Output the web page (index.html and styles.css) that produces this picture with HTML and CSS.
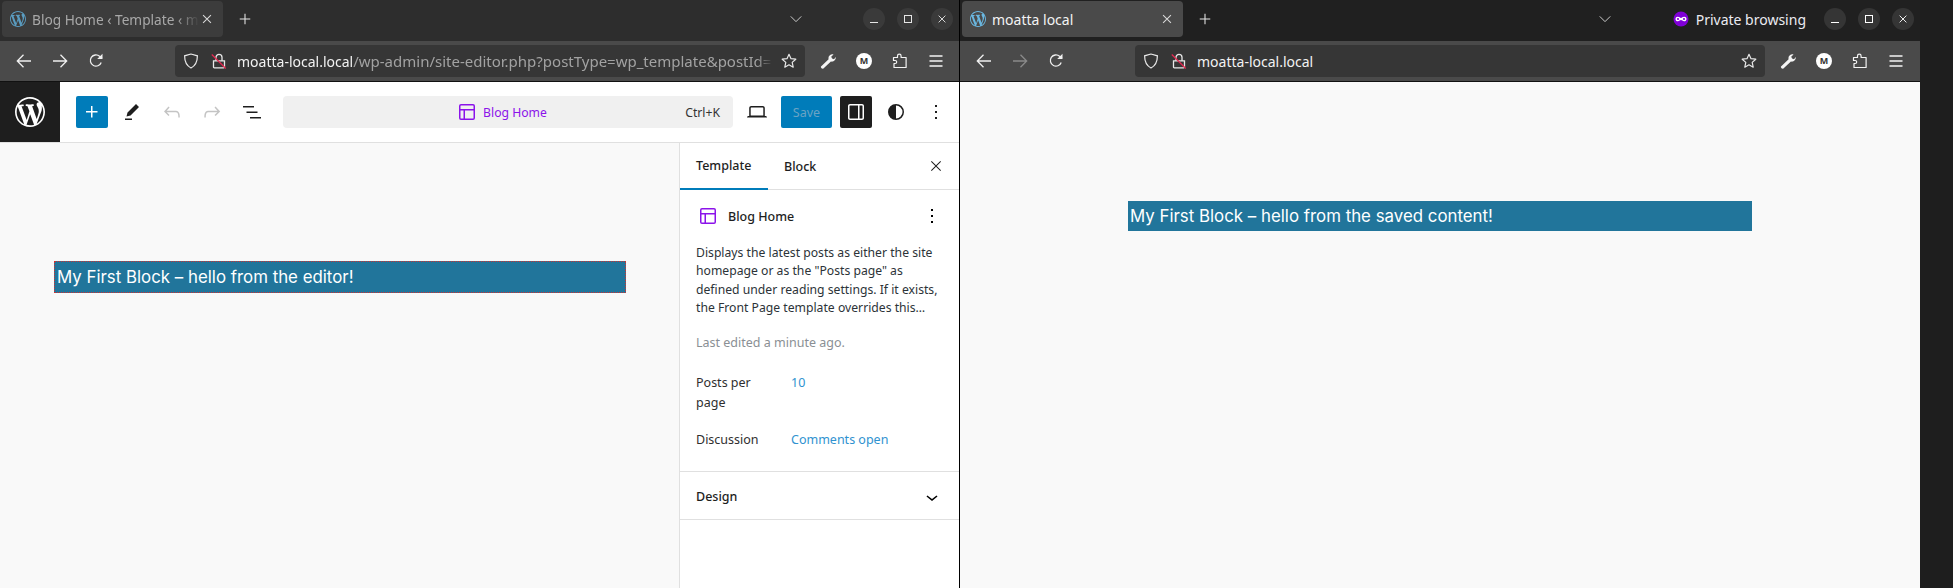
FILE: index.html
```html
<!DOCTYPE html>
<html lang="en">
<head>
<meta charset="utf-8">
<title>Two browser windows</title>
<link rel="stylesheet" href="styles.css">
</head>
<body>
<svg class="sprite" xmlns="http://www.w3.org/2000/svg">
  <symbol id="wp" viewBox="0 0 20 20"><path d="M20 10c0-5.51-4.49-10-10-10C4.48 0 0 4.49 0 10c0 5.52 4.48 10 10 10 5.51 0 10-4.48 10-10zM7.78 15.37L4.37 6.22c.55-.02 1.17-.08 1.17-.08.5-.06.44-1.13-.06-1.11 0 0-1.45.11-2.37.11-.18 0-.37 0-.58-.01C4.12 2.69 6.87 1.11 10 1.11c2.33 0 4.45.87 6.05 2.34-.68-.11-1.65.39-1.65 1.58 0 .74.45 1.36.9 2.1.35.61.55 1.36.55 2.46 0 1.49-1.4 5-1.4 5l-3.03-8.37c.54-.02.82-.17.82-.17.5-.05.44-1.25-.06-1.22 0 0-1.44.12-2.38.12-.87 0-2.33-.12-2.33-.12-.5-.03-.56 1.2-.06 1.22l.92.08 1.26 3.41zM17.41 10c.24-.64.74-1.87.43-4.25.7 1.29 1.05 2.71 1.05 4.25 0 3.29-1.73 6.24-4.4 7.78.97-2.59 1.94-5.2 2.92-7.78zM6.1 18.09C3.12 16.65 1.11 13.53 1.11 10c0-1.3.23-2.48.72-3.59C3.25 10.3 4.67 14.2 6.1 18.09zm4.03-6.63l2.58 6.98c-.86.29-1.76.45-2.71.45-.79 0-1.57-.11-2.29-.33.81-2.38 1.62-4.74 2.42-7.1z"/></symbol>
  <symbol id="plus" viewBox="0 0 24 24"><path d="M11 12.5V17.5H12.5V12.5H17.5V11H12.5V6H11V11H6V12.5H11Z"/></symbol>
  <symbol id="pen" viewBox="0 0 24 24"><path d="m19 7-3-3-8.5 8.5-1 4 4-1L19 7Zm-7 11.5H5V20h7v-1.5Z"/></symbol>
  <symbol id="undo" viewBox="0 0 24 24"><path d="M18.3 11.7c-.6-.6-1.4-.9-2.3-.9H6.7l2.9-3.3-1.1-1-4.5 5L8.5 16l1-1-2.7-2.7H16c.5 0 .9.2 1.3.5 1 1 1 3.4 1 4.5v.3h1.5v-.2c0-1.5 0-4.3-1.5-5.7z"/></symbol>
  <symbol id="redo" viewBox="0 0 24 24"><path d="M15.6 6.5l-1.1 1 2.9 3.3H8c-.9 0-1.7.3-2.3.9-1.4 1.5-1.4 4.2-1.4 5.6v.2h1.5v-.3c0-1.1 0-3.5 1-4.5.3-.3.7-.5 1.3-.5h9.2L14.5 15l1.1 1.1 4.6-4.6-4.6-5z"/></symbol>
  <symbol id="listview" viewBox="0 0 24 24"><path d="M3 6h11v1.5H3V6Zm3.5 5.5h11V13h-11v-1.5ZM21 17H10v1.5h11V17Z"/></symbol>
  <symbol id="layout" viewBox="0 0 24 24"><path d="M18 5.5H6a.5.5 0 0 0-.5.5v3h13V6a.5.5 0 0 0-.5-.5Zm.5 5H10v8h8a.5.5 0 0 0 .5-.5v-7.5Zm-10 0h-3V18a.5.5 0 0 0 .5.5h2.5v-8ZM6 4h12a2 2 0 0 1 2 2v12a2 2 0 0 1-2 2H6a2 2 0 0 1-2-2V6a2 2 0 0 1 2-2Z"/></symbol>
  <symbol id="laptop" viewBox="0 0 24 24"><path d="M20.5 16h-.7V8c0-1.1-.9-2-2-2H6.2c-1.1 0-2 .9-2 2v8h-.7c-.8 0-1.5.7-1.5 1.5h20c0-.8-.7-1.5-1.5-1.5zM5.7 8c0-.3.2-.5.5-.5h11.6c.3 0 .5.2.5.5v7.6H5.7V8z"/></symbol>
  <symbol id="drawer" viewBox="0 0 24 24"><path d="M18 4H6c-1.1 0-2 .9-2 2v12c0 1.1.9 2 2 2h12c1.1 0 2-.9 2-2V6c0-1.1-.9-2-2-2zm-4 14.5H6c-.3 0-.5-.2-.5-.5V6c0-.3.2-.5.5-.5h8v13zm4.5-.5c0 .3-.2.5-.5.5h-2.5v-13H18c.3 0 .5.2.5.5v12z"/></symbol>
  <symbol id="contrast" viewBox="0 0 24 24"><path d="M12 4a8 8 0 1 0 0 16 8 8 0 0 0 0-16Zm0 1.5a6.5 6.5 0 1 1 0 13v-13Z"/></symbol>
  <symbol id="kebab" viewBox="0 0 24 24"><path d="M13 19h-2v-2h2v2zm0-6h-2v-2h2v2zm0-6h-2V5h2v2z"/></symbol>
  <symbol id="close" viewBox="0 0 24 24"><path d="m13.06 12 6.47-6.47-1.06-1.06L12 10.94 5.53 4.47 4.47 5.53 10.94 12l-6.47 6.47 1.06 1.06L12 13.06l6.47 6.47 1.06-1.06L13.06 12Z"/></symbol>
  <symbol id="chev" viewBox="0 0 24 24"><path d="M17.5 11.6L12 16l-5.5-4.4.9-1.2L12 14l4.5-3.6 1 1.2z"/></symbol>
  <symbol id="ffplus" viewBox="0 0 16 16"><path d="M8 2v12M2 8h12" fill="none" stroke="currentColor" stroke-width="1.2"/></symbol>
  <symbol id="ffx" viewBox="0 0 16 16"><path d="M3.5 3.5l9 9M12.500 3.500l-9 9" fill="none" stroke="currentColor" stroke-width="1.2"/></symbol>
  <symbol id="ffchev" viewBox="0 0 16 16"><path d="M2 5l6 6 6-6" fill="none" stroke="currentColor" stroke-width="1.100"/></symbol>
  <symbol id="back" viewBox="0 0 16 16"><path d="M15 8H1.500M7.500 1.700 1.300 8l6.200 6.300" fill="none" stroke="currentColor" stroke-width="1.300"/></symbol>
  <symbol id="forward" viewBox="0 0 16 16"><path d="M1 8h13.500M8.500 1.700 14.700 8l-6.200 6.300" fill="none" stroke="currentColor" stroke-width="1.300"/></symbol>
  <symbol id="reload" viewBox="0 0 16 16"><path d="M13.200 9.500A5.600 5.600 0 1 1 11.600 3.300L14 5.200" fill="none" stroke="currentColor" stroke-width="1.300"/><path d="M14.500 .8v5.300H9.200z" fill="currentColor"/></symbol>
  <symbol id="shield" viewBox="0 0 16 16"><path d="M8 1 1.600 2.800c0 6.200 2 10 6.400 12.200 4.400-2.200 6.400-6 6.400-12.200z" fill="none" stroke="currentColor" stroke-width="1.200"/></symbol>
  <symbol id="lock" viewBox="0 0 16 16"><path d="M2.500 7.800h11v6.200a.8.800 0 0 1-.8.800H3.300a.8.800 0 0 1-.8-.8zM5 7.800V4.300a3 3 0 0 1 6 0v3.500" fill="none" stroke="currentColor" stroke-width="1.300"/><path d="M.8 1.500 14.800 15.500" stroke="#e22850" stroke-width="1.300"/></symbol>
  <symbol id="star" viewBox="0 0 16 16"><path d="M8 1.300l2 4.400 4.800.5-3.600 3.200 1 4.800L8 11.800l-4.200 2.400 1-4.800L1.200 6.200 6 5.700z" fill="none" stroke="currentColor" stroke-width="1.200" stroke-linejoin="round"/></symbol>
  <symbol id="wrench" viewBox="0 0 16 16"><path d="M1 13.500 8.600 6.200C8 4 9.300 1.800 12 1.300c.6-.1 1.100 0 1.500.1L11.200 3.800l.9 1.800 1.900.7 1.800-2.200c.3 2.600-1.700 5-4.900 4.500L3.400 15.500c-1 .8-3.100-.8-2.400-2z" fill="currentColor"/></symbol>
  <symbol id="puzzle" viewBox="0 0 16 16"><path d="M2 14.500v-4h1.200a1.500 1.500 0 0 0 0-3H1.500V4.500h4V3a1.800 1.800 0 0 1 3.600 0v1.500h5v10z" fill="none" stroke="currentColor" stroke-width="1.200" stroke-linejoin="round"/></symbol>
  <symbol id="burger" viewBox="0 0 16 16"><path d="M1.500 3h13M1.500 8h13M1.500 13h13" fill="none" stroke="currentColor" stroke-width="1.300"/></symbol>
  <symbol id="mask" viewBox="0 0 16 16"><circle cx="8" cy="8" r="7.500" fill="#8000d7"/><path d="M2.500 8c0-1.500 1-2.300 2.300-2.300 1.500 0 2.200 1.200 3.200 1.200s1.700-1.200 3.200-1.200c1.300 0 2.300.8 2.300 2.300s-1 2.300-2.300 2.300c-1.500 0-2.200-1.200-3.200-1.200s-1.700 1.200-3.200 1.200C3.500 10.300 2.500 9.500 2.500 8z" fill="#fff"/><circle cx="5" cy="8" r="1.100" fill="#8000d7"/><circle cx="11" cy="8" r="1.100" fill="#8000d7"/></symbol>
</svg>

<main class="desktop">
  <section class="window window-left">
    <div class="tabbar">
      <div class="tab">
        <svg class="favicon"><use href="#wp"/></svg>
        <span class="tab-title fade">Blog Home ‹ Template ‹ m</span>
        <svg class="tab-close"><use href="#ffx"/></svg>
      </div>
      <svg class="new-tab"><use href="#ffplus"/></svg>
      <svg class="tabs-menu"><use href="#ffchev"/></svg>
      <div class="win-controls">
        <span class="win-btn"><span class="min-glyph"></span></span>
        <span class="win-btn"><span class="max-glyph"></span></span>
        <span class="win-btn"><svg class="x-glyph"><use href="#ffx"/></svg></span>
      </div>
    </div>
    <div class="navbar">
      <svg class="nav-ico first"><use href="#back"/></svg>
      <svg class="nav-ico"><use href="#forward"/></svg>
      <svg class="nav-ico"><use href="#reload"/></svg>
      <div class="urlbar">
        <svg class="url-ico"><use href="#shield"/></svg>
        <svg class="url-ico lock"><use href="#lock"/></svg>
        <span class="url url-fade"><b>moatta-local.local</b>/wp-admin/site-editor.php?postType=wp_template&amp;postId=</span>
        <svg class="url-ico star"><use href="#star"/></svg>
      </div>
      <div class="nav-tools">
        <svg class="tool-ico"><use href="#wrench"/></svg>
        <span class="avatar">M</span>
        <svg class="tool-ico"><use href="#puzzle"/></svg>
        <svg class="tool-ico"><use href="#burger"/></svg>
      </div>
    </div>
    <div class="page">
      <header class="wp-header">
        <a class="wp-logo"><svg><use href="#wp"/></svg></a>
        <div class="wp-tools">
          <span class="ic-btn primary"><svg><use href="#plus"/></svg></span>
          <span class="ic-btn"><svg><use href="#pen"/></svg></span>
          <span class="ic-btn muted"><svg><use href="#undo"/></svg></span>
          <span class="ic-btn muted"><svg><use href="#redo"/></svg></span>
          <span class="ic-btn"><svg><use href="#listview"/></svg></span>
        </div>
        <div class="command">
          <span class="command-title"><svg><use href="#layout"/></svg>Blog Home</span>
          <span class="command-key">Ctrl+K</span>
        </div>
        <div class="wp-actions">
          <span class="ic-btn"><svg><use href="#laptop"/></svg></span>
          <span class="save">Save</span>
          <span class="ic-btn dark"><svg><use href="#drawer"/></svg></span>
          <span class="ic-btn"><svg><use href="#contrast"/></svg></span>
          <span class="ic-btn"><svg><use href="#kebab"/></svg></span>
        </div>
      </header>
      <div class="editor">
        <div class="canvas">
          <p class="block block-editor">My First Block – hello from the editor!</p>
        </div>
        <aside class="sidebar">
          <div class="side-tabs">
            <span class="side-tab active">Template</span>
            <span class="side-tab">Block</span>
            <svg class="side-close"><use href="#close"/></svg>
          </div>
          <div class="panel">
            <div class="panel-title">
              <svg class="panel-ico"><use href="#layout"/></svg>
              <span class="panel-name">Blog Home</span>
              <svg class="panel-more"><use href="#kebab"/></svg>
            </div>
            <p class="desc">Displays the latest posts as either the site homepage or as the "Posts page" as defined under reading settings. If it exists, the Front Page template overrides this…</p>
            <p class="edited">Last edited a minute ago.</p>
            <div class="meta">
              <span class="meta-label">Posts per page</span><a class="meta-value">10</a>
              <span class="meta-label">Discussion</span><a class="meta-value">Comments open</a>
            </div>
          </div>
          <div class="design">
            <span>Design</span>
            <svg><use href="#chev"/></svg>
          </div>
        </aside>
      </div>
    </div>
  </section>

  <section class="window window-right">
    <div class="tabbar">
      <div class="tab">
        <svg class="favicon"><use href="#wp"/></svg>
        <span class="tab-title">moatta local</span>
        <svg class="tab-close"><use href="#ffx"/></svg>
      </div>
      <svg class="new-tab"><use href="#ffplus"/></svg>
      <svg class="tabs-menu"><use href="#ffchev"/></svg>
      <div class="private">
        <svg><use href="#mask"/></svg>
        <span>Private browsing</span>
      </div>
      <div class="win-controls">
        <span class="win-btn"><span class="min-glyph"></span></span>
        <span class="win-btn"><span class="max-glyph"></span></span>
        <span class="win-btn"><svg class="x-glyph"><use href="#ffx"/></svg></span>
      </div>
    </div>
    <div class="navbar">
      <svg class="nav-ico first"><use href="#back"/></svg>
      <svg class="nav-ico off"><use href="#forward"/></svg>
      <svg class="nav-ico"><use href="#reload"/></svg>
      <div class="urlbar">
        <svg class="url-ico"><use href="#shield"/></svg>
        <svg class="url-ico lock"><use href="#lock"/></svg>
        <span class="url"><b>moatta-local.local</b></span>
        <svg class="url-ico star"><use href="#star"/></svg>
      </div>
      <div class="nav-tools">
        <svg class="tool-ico"><use href="#wrench"/></svg>
        <span class="avatar">M</span>
        <svg class="tool-ico"><use href="#puzzle"/></svg>
        <svg class="tool-ico"><use href="#burger"/></svg>
      </div>
    </div>
    <div class="page page-front">
      <p class="block block-front">My First Block – hello from the saved content!</p>
    </div>
  </section>
  <div class="strip"></div>
</main>
</body>
</html>
```
FILE: styles.css
```css
* { box-sizing: border-box; }
html, body { margin: 0; height: 100%; overflow: hidden; }
body { background: #1e1e1e; font-family: "Noto Sans", sans-serif; }
.sprite { display: none; }
p { margin: 0; }

.desktop { display: flex; height: 588px; }
.window { display: flex; flex-direction: column; height: 100%; }
.window-left { width: 960px; border-right: 1px solid #000; }
.window-right { width: 960px; }
.strip { flex: 1; background: #1e1e1e; }

/* tab strip */
.tabbar { display: flex; align-items: center; height: 41px; flex: none; padding: 1px 0 4px 2px; background: #2d2d2d; color: #fbfbfe; }
.window-right .tabbar { background: #202020; }
.tab { display: flex; align-items: center; width: 221px; height: 36px; padding: 0 9px 0 8px; border-radius: 4px; background: #3c3c3c; color: #a8a8a8; font-size: 13.7px; }
.window-right .tab { background: #4a4a4a; color: #f3f3f3; font-size: 14px; }
.favicon { width: 16px; height: 16px; flex: none; fill: #5a9cc0; margin-right: 6px; }
.window-right .favicon { fill: #6ab7e0; }
.tab-title { flex: 1; white-space: nowrap; }
.fade { -webkit-mask-image: linear-gradient(to right, #000 86%, transparent 100%); mask-image: linear-gradient(to right, #000 86%, transparent 100%); }
.tab-close { width: 14px; height: 14px; flex: none; color: #d8d8d8; }
.new-tab { width: 14px; height: 14px; flex: none; margin-left: 15px; color: #e8e8e8; }
.tabs-menu { width: 14px; height: 14px; flex: none; margin-left: auto; color: #d0d0d0; }
.window-left .tabs-menu { margin-right: 60px; }
.window-right .tabs-menu { margin-right: 61px; }
.win-controls { display: flex; gap: 12px; padding-right: 6px; }
.win-btn { display: flex; align-items: center; justify-content: center; width: 22px; height: 22px; border-radius: 50%; background: #3a3a3a; color: #e6e6e6; }
.window-right .win-btn { background: #353535; color: #fff; }
.min-glyph { width: 8px; height: 1px; margin-top: 7px; background: currentColor; }
.max-glyph { width: 8px; height: 8px; border: 1px solid currentColor; }
.x-glyph { width: 12px; height: 12px; }
.private { display: flex; align-items: center; gap: 7px; margin-right: 18px; color: #ebebf2; font-size: 14px; }
.private svg { width: 16px; height: 16px; }

/* nav bar */
.navbar { display: flex; align-items: center; height: 41px; flex: none; padding-bottom: 1px; background: #4a4a4a; border-bottom: 1px solid #111; color: #f0f0f0; }
.nav-ico { width: 16px; height: 16px; flex: none; margin-right: 20px; }
.nav-ico.first { margin-left: 16px; }
.nav-ico.off { color: #8a8a8a; }
.urlbar { display: flex; align-items: center; width: 630px; height: 32px; margin-left: 51px; padding: 0 8px; border-radius: 4px; background: #363636; }
.url-ico { width: 16px; height: 16px; flex: none; color: #e8e8e8; }
.url-ico.lock { margin-left: 12px; }
.url-ico.star { margin-left: auto; }
.url { flex: 1; min-width: 0; margin: 0 8px 0 10px; white-space: nowrap; color: #a2a2a2; font-size: 15px; }
.url-fade { -webkit-mask-image: linear-gradient(to right, #000 97%, transparent 100%); mask-image: linear-gradient(to right, #000 97%, transparent 100%); }
.url b { font-weight: 400; font-size: 14px; color: #f2f2f2; }
.nav-tools { display: flex; align-items: center; gap: 20px; margin-left: 15px; }
.tool-ico { width: 16px; height: 16px; flex: none; color: #f4f4f4; }
.avatar { display: flex; align-items: center; justify-content: center; width: 16px; height: 16px; border-radius: 50%; background: #fff; color: #333; font-size: 9px; font-weight: 700; }

/* page */
.page { flex: 1; min-height: 0; display: flex; flex-direction: column; background: #fff; }
.page-front { background: #f9f9f9; padding: 119px 168px 0; }

.wp-header { display: flex; align-items: center; flex: none; height: 61px; border-bottom: 1px solid #e0e0e0; background: #fff; }
.wp-logo { display: flex; align-items: center; justify-content: center; width: 60px; height: 60px; flex: none; background: #1e1e1e; }
.wp-logo svg { width: 30px; height: 30px; fill: #fff; }
.wp-tools { display: flex; align-items: center; gap: 8px; margin-left: 16px; width: 207px; flex: none; }
.ic-btn { display: flex; align-items: center; justify-content: center; width: 32px; height: 32px; flex: none; border-radius: 2px; fill: #1e1e1e; }
.ic-btn svg { width: 24px; height: 24px; }
.ic-btn.primary { background: #007cba; fill: #fff; }
.ic-btn.dark { background: #1e1e1e; fill: #fff; }
.ic-btn.muted { fill: #c4c4c4; }
.command { position: relative; display: flex; align-items: center; justify-content: center; width: 450px; height: 32px; flex: none; padding-right: 14px; border-radius: 4px; background: #f0f0f0; font-size: 12.2px; }
.command-title { display: flex; align-items: center; color: #8b13ea; fill: #8b13ea; }
.command-title svg { width: 24px; height: 24px; margin-right: 4px; }
.command-key { position: absolute; right: 13px; color: #333; }
.wp-actions { display: flex; align-items: center; gap: 8px; margin-left: 8px; }
.wp-actions .save { display: flex; align-items: center; justify-content: center; width: 51px; height: 32px; border-radius: 2px; background: #007cba; color: #6aa3c4; font-size: 12.5px; }

.editor { flex: 1; min-height: 0; display: flex; }
.canvas { flex: 1; background: #f9f9f9; padding: 118px 53px 0 54px; }
.sidebar { width: 280px; flex: none; display: flex; flex-direction: column; border-left: 1px solid #e0e0e0; background: #fff; color: #1e1e1e; font-size: 12.5px; }

.block { background: #21759b; color: #fff; font-family: Inter, sans-serif; font-size: 16.85px; }
.block-editor { height: 32px; line-height: 30px; padding-left: 2px; border: 1px dotted #c33; }
.block-front { height: 30px; line-height: 30px; padding-left: 2px; }

.side-tabs { display: flex; align-items: center; flex: none; height: 47px; border-bottom: 1px solid #e0e0e0; font-weight: 500; }
.side-tab { display: flex; align-items: center; height: 47px; padding: 0 16px; }
.side-tab.active { width: 88px; border-bottom: 2px solid #007cba; margin-bottom: -1px; }
.side-close { width: 16px; height: 16px; fill: #1e1e1e; margin-left: auto; margin-right: 15px; }

.panel { padding: 14px 16px 20px; border-bottom: 1px solid #e0e0e0; flex: none; }
.panel-title { display: flex; align-items: center; height: 24px; }
.panel-ico { width: 24px; height: 24px; fill: #8b13ea; flex: none; margin-right: 8px; }
.panel-name { flex: 1; font-weight: 500; }
.panel-more { width: 24px; height: 24px; margin-right: -1px; }
.desc { margin-top: 16px; font-size: 12.2px; line-height: 18.4px; color: #2c3338; }
.edited { margin-top: 16px; line-height: 18px; color: #8a8f94; }
.meta { display: grid; grid-template-columns: 95px 1fr; row-gap: 16px; margin-top: 21px; line-height: 20.8px; }
.meta-label { padding-right: 24px; color: #2f2f2f; }
.meta-value { color: #2f92d0; }
.design { display: flex; align-items: center; justify-content: space-between; flex: none; height: 48px; padding: 2px 16px 0; border-bottom: 1px solid #e0e0e0; font-weight: 500; }
.design svg { width: 24px; height: 24px; margin-right: -1px; }
```
